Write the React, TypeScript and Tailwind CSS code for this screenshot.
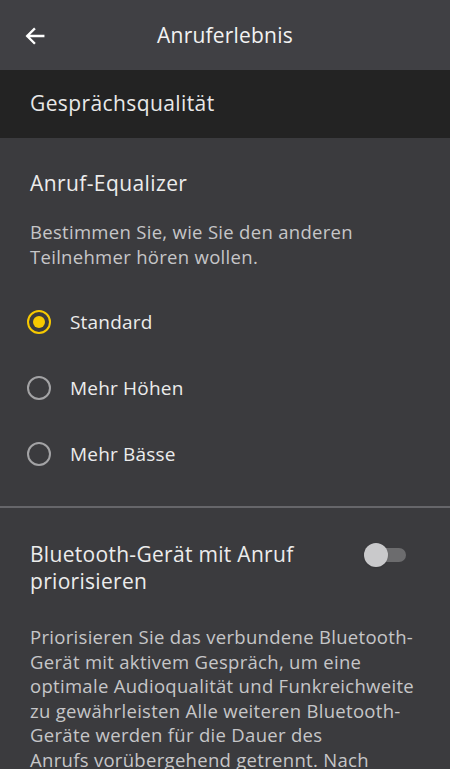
const font = { fontFamily: '"Open Sans", "Noto Sans", sans-serif' };

function Radio({ checked }: { checked?: boolean }) {
  if (checked) {
    return (
      <span className="flex h-[24px] w-[24px] items-center justify-center rounded-full border-[2.5px] border-[#f7c900]">
        <span className="h-[12px] w-[12px] rounded-full bg-[#f7c900]" />
      </span>
    );
  }
  return <span className="h-[24px] w-[24px] rounded-full border-[2.5px] border-[#a3a3a5]" />;
}

const options = [
  { label: "Standard", checked: true },
  { label: "Mehr Höhen" },
  { label: "Mehr Bässe" },
];

const bodyLines = [
  "Priorisieren Sie das verbundene Bluetooth-",
  "Gerät mit aktivem Gespräch, um eine",
  "optimale Audioqualität und Funkreichweite",
  "zu gewährleisten Alle weiteren Bluetooth-",
  "Geräte werden für die Dauer des",
  "Anrufs vorübergehend getrennt. Nach",
];

export default function App() {
  return (
    <div className="h-[769px] w-[450px] overflow-hidden bg-[#3b3b3e] text-[#ececec]" style={font}>
      <header className="relative flex h-[70px] items-center justify-center bg-[#404044]">
        <svg
          className="absolute left-[24px] top-[25px]"
          width="22"
          height="22"
          viewBox="0 0 24 24"
          fill="none"
          stroke="#ffffff"
          strokeWidth="2.6"
          strokeLinecap="square"
        >
          <path d="M21 12H4M11 4.5L3.5 12 11 19.5" />
        </svg>
        <h1 className="text-[21px] leading-none tracking-[0.2px] text-[#f2f2f2]">Anruferlebnis</h1>
      </header>

      <div className="flex h-[68px] items-center bg-[#232323] px-[30px]">
        <h2 className="text-[21px] tracking-[0.4px] text-[#e8e8e8]">Gesprächsqualität</h2>
      </div>

      <section className="px-[30px] pt-[30px]">
        <h3 className="text-[21px] leading-[30px] tracking-[0.4px]">Anruf-Equalizer</h3>
        <p className="mt-[21px] text-[18.5px] leading-[25px] tracking-[0.3px] text-[#c6c6c8]">
          Bestimmen Sie, wie Sie den anderen
          <br />
          Teilnehmer hören wollen.
        </p>
      </section>

      <ul className="mt-[20px] flex flex-col">
        {options.map((o) => (
          <li key={o.label} className="flex h-[66px] items-center gap-[19px] pl-[27px]">
            <Radio checked={o.checked} />
            <span className="text-[19px] tracking-[0.2px] text-[#ececec]">{o.label}</span>
          </li>
        ))}
      </ul>

      <div className="mt-[19px] h-[2px] bg-[#66666a]" />

      <section className="flex items-start justify-between px-[30px] pt-[33px]">
        <h3 className="w-[300px] text-[21px] leading-[27px] tracking-[0.3px]">
          Bluetooth-Gerät mit Anruf
          <br />
          priorisieren
        </h3>
        <div className="relative mr-[14px] mt-[7px] h-[14px] w-[36px] rounded-full bg-[#6c6c6e]">
          <span className="absolute left-[-6px] top-[-5px] h-[24px] w-[24px] rounded-full bg-[#c9c9cb] shadow" />
        </div>
      </section>

      <p className="mt-[30px] pl-[30px] text-[18.5px] leading-[24.5px] tracking-[0.3px] text-[#c6c6c8]">
        {bodyLines.map((l) => (
          <span key={l} className="block whitespace-nowrap">
            {l}
          </span>
        ))}
      </p>
    </div>
  );
}
